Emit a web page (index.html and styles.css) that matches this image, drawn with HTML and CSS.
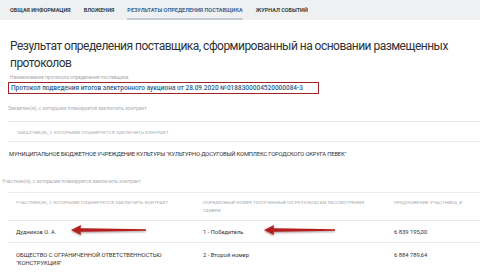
FILE: index.html
```html
<!DOCTYPE html>
<html lang="ru">
<head>
    <meta charset="UTF-8">
    <meta name="viewport" content="width=device-width, initial-scale=1.0">
    <title>Результаты определения поставщика</title>
    <link rel="stylesheet" href="styles.css">
</head>
<body>
    <nav class="tabs">
        <a class="tab">Общая информация</a>
        <a class="tab">Вложения</a>
        <a class="tab active">Результаты определения поставщика</a>
        <a class="tab">Журнал событий</a>
    </nav>
    <main class="content">
        <h1 class="title">Результат определения поставщика, сформированный на основании размещенных протоколов</h1>

        <div class="field-label">Наименование протокола определения поставщика</div>
        <div class="protocol">Протокол подведения итогов электронного аукциона от 28.09.2020 №0188300004520000084-3</div>

        <div class="section-label customers-label">Заказчик(и), с которыми планируется заключить контракт</div>
        <table class="grid customers">
            <tr class="head">
                <th>Заказчик(и), с которыми планируется заключить контракт</th>
            </tr>
            <tr>
                <td>МУНИЦИПАЛЬНОЕ БЮДЖЕТНОЕ УЧРЕЖДЕНИЕ КУЛЬТУРЫ "КУЛЬТУРНО-ДОСУГОВЫЙ КОМПЛЕКС ГОРОДСКОГО ОКРУГА ПЕВЕК"</td>
            </tr>
        </table>

        <div class="section-label members-label">Участник(и), с которыми планируется заключить контракт</div>
        <div class="members-wrap">
            <table class="grid members">
                <tr class="head">
                    <th class="c1">Участник(и), с которыми планируется заключить контракт</th>
                    <th class="c2">Порядковый номер, полученный по результатам рассмотрения заявки</th>
                    <th class="c3">Предложение участника, ₽</th>
                </tr>
                <tr class="r1">
                    <td class="c1">Дудников О. А.</td>
                    <td class="c2">1 - Победитель</td>
                    <td class="c3">6 839 195,00</td>
                </tr>
                <tr class="r2">
                    <td class="c1">ОБЩЕСТВО С ОГРАНИЧЕННОЙ ОТВЕТСТВЕННОСТЬЮ "КОНСТРУКЦИЯ"</td>
                    <td class="c2">2 - Второй номер</td>
                    <td class="c3">6 884 789,64</td>
                </tr>
            </table>

            <!-- red pointer arrows drawn over the first row -->
            <svg class="arrow arrow-name" width="78" height="14" viewBox="0 0 78 14">
                <path d="M1 7 L11 2 L10.5 5.3 L76 6.3 L76 7.7 L10.5 8.7 L11 12 Z" />
            </svg>
            <svg class="arrow arrow-place" width="74" height="14" viewBox="0 0 74 14">
                <path d="M1 7 L11 2 L10.5 5.3 L72 6.3 L72 7.7 L10.5 8.7 L11 12 Z" />
            </svg>
        </div>
    </main>
</body>
</html>
```

FILE: styles.css
```css
body {
    margin: 0;
    font-family: Roboto, "Liberation Sans", sans-serif;
    background-color: #fff;
    color: #333;
    overflow: hidden;
}
.tabs {
    display: flex;
    align-items: flex-end;
    gap: 13px;
    height: 20px;
    padding-left: 10px;
    background-color: #eef0f2;
}
.tab {
    height: 18px;
    line-height: 20px;
    font-size: 5.5px;
    font-weight: 700;
    text-transform: uppercase;
    color: #3b3f44;
    border-bottom: 2px solid transparent;
}
.tab.active {
    color: #3a6a98;
    border-bottom-color: #c5ccd4;
}
.content {
    padding: 0 0 0 8px;
}
.title {
    margin: 18px 0 0 2px;
    font-size: 12px;
    line-height: 17px;
    font-weight: 400;
    letter-spacing: -0.52px;
    color: #2f3236;
    width: 468px;
}
.field-label {
    margin: 3px 0 0 2px;
    font-size: 4.8px;
    line-height: 6px;
    color: #a4a7ab;
}
.protocol {
    margin-top: 1px;
    width: 307px;
    height: 10px;
    line-height: 10px;
    padding-left: 2px;
    font-size: 6.5px;
    font-weight: 500;
    color: #2c5f8f;
    border: 1.5px solid #9e2428;
    white-space: nowrap;
}
.section-label {
    font-size: 5px;
    line-height: 6px;
    color: #a8abaf;
}
.customers-label {
    margin-top: 11px;
}
.members-label {
    margin: 15px 0 0 -6px;
}
.grid {
    width: 472px;
    border-collapse: collapse;
    table-layout: fixed;
}
.grid th,
.grid td {
    box-sizing: border-box;
    padding: 0;
    text-align: left;
    border-top: 1.5px solid #e9eaeb;
}
.grid th {
    font-size: 4.4px;
    font-weight: 400;
    text-transform: uppercase;
    letter-spacing: 0.15px;
    color: #a3a6aa;
}
.grid td {
    font-size: 5.8px;
    color: #2f3236;
}
.customers {
    margin-top: 10px;
}
.customers th {
    height: 20px;
    padding: 1px 0 0 9px;
}
.customers td {
    height: 21px;
    padding: 4px 0 0 1px;
    letter-spacing: -0.15px;
}
.members-wrap {
    position: relative;
    margin-top: 8px;
}
.members .c1 {
    width: 195px;
    padding-left: 8px;
}
.members .c2 {
    width: 191px;
}
.members th {
    height: 28px;
    padding-top: 6px;
    vertical-align: top;
    line-height: 8px;
}
.members th.c2 {
    padding-right: 20px;
}
.members .r1 td {
    height: 22px;
    padding-top: 1px;
}
.members .r2 td {
    height: 30px;
    vertical-align: top;
    padding-top: 8px;
    line-height: 8px;
}
.members .r2 .c1 {
    padding-right: 40px;
}
.arrow {
    position: absolute;
    fill: #b41f1d;
    filter: drop-shadow(0.5px 1px 0.8px rgba(60, 0, 0, 0.45));
}
.arrow-name {
    left: 62px;
    top: 31px;
}
.arrow-place {
    left: 255px;
    top: 31px;
}
```
